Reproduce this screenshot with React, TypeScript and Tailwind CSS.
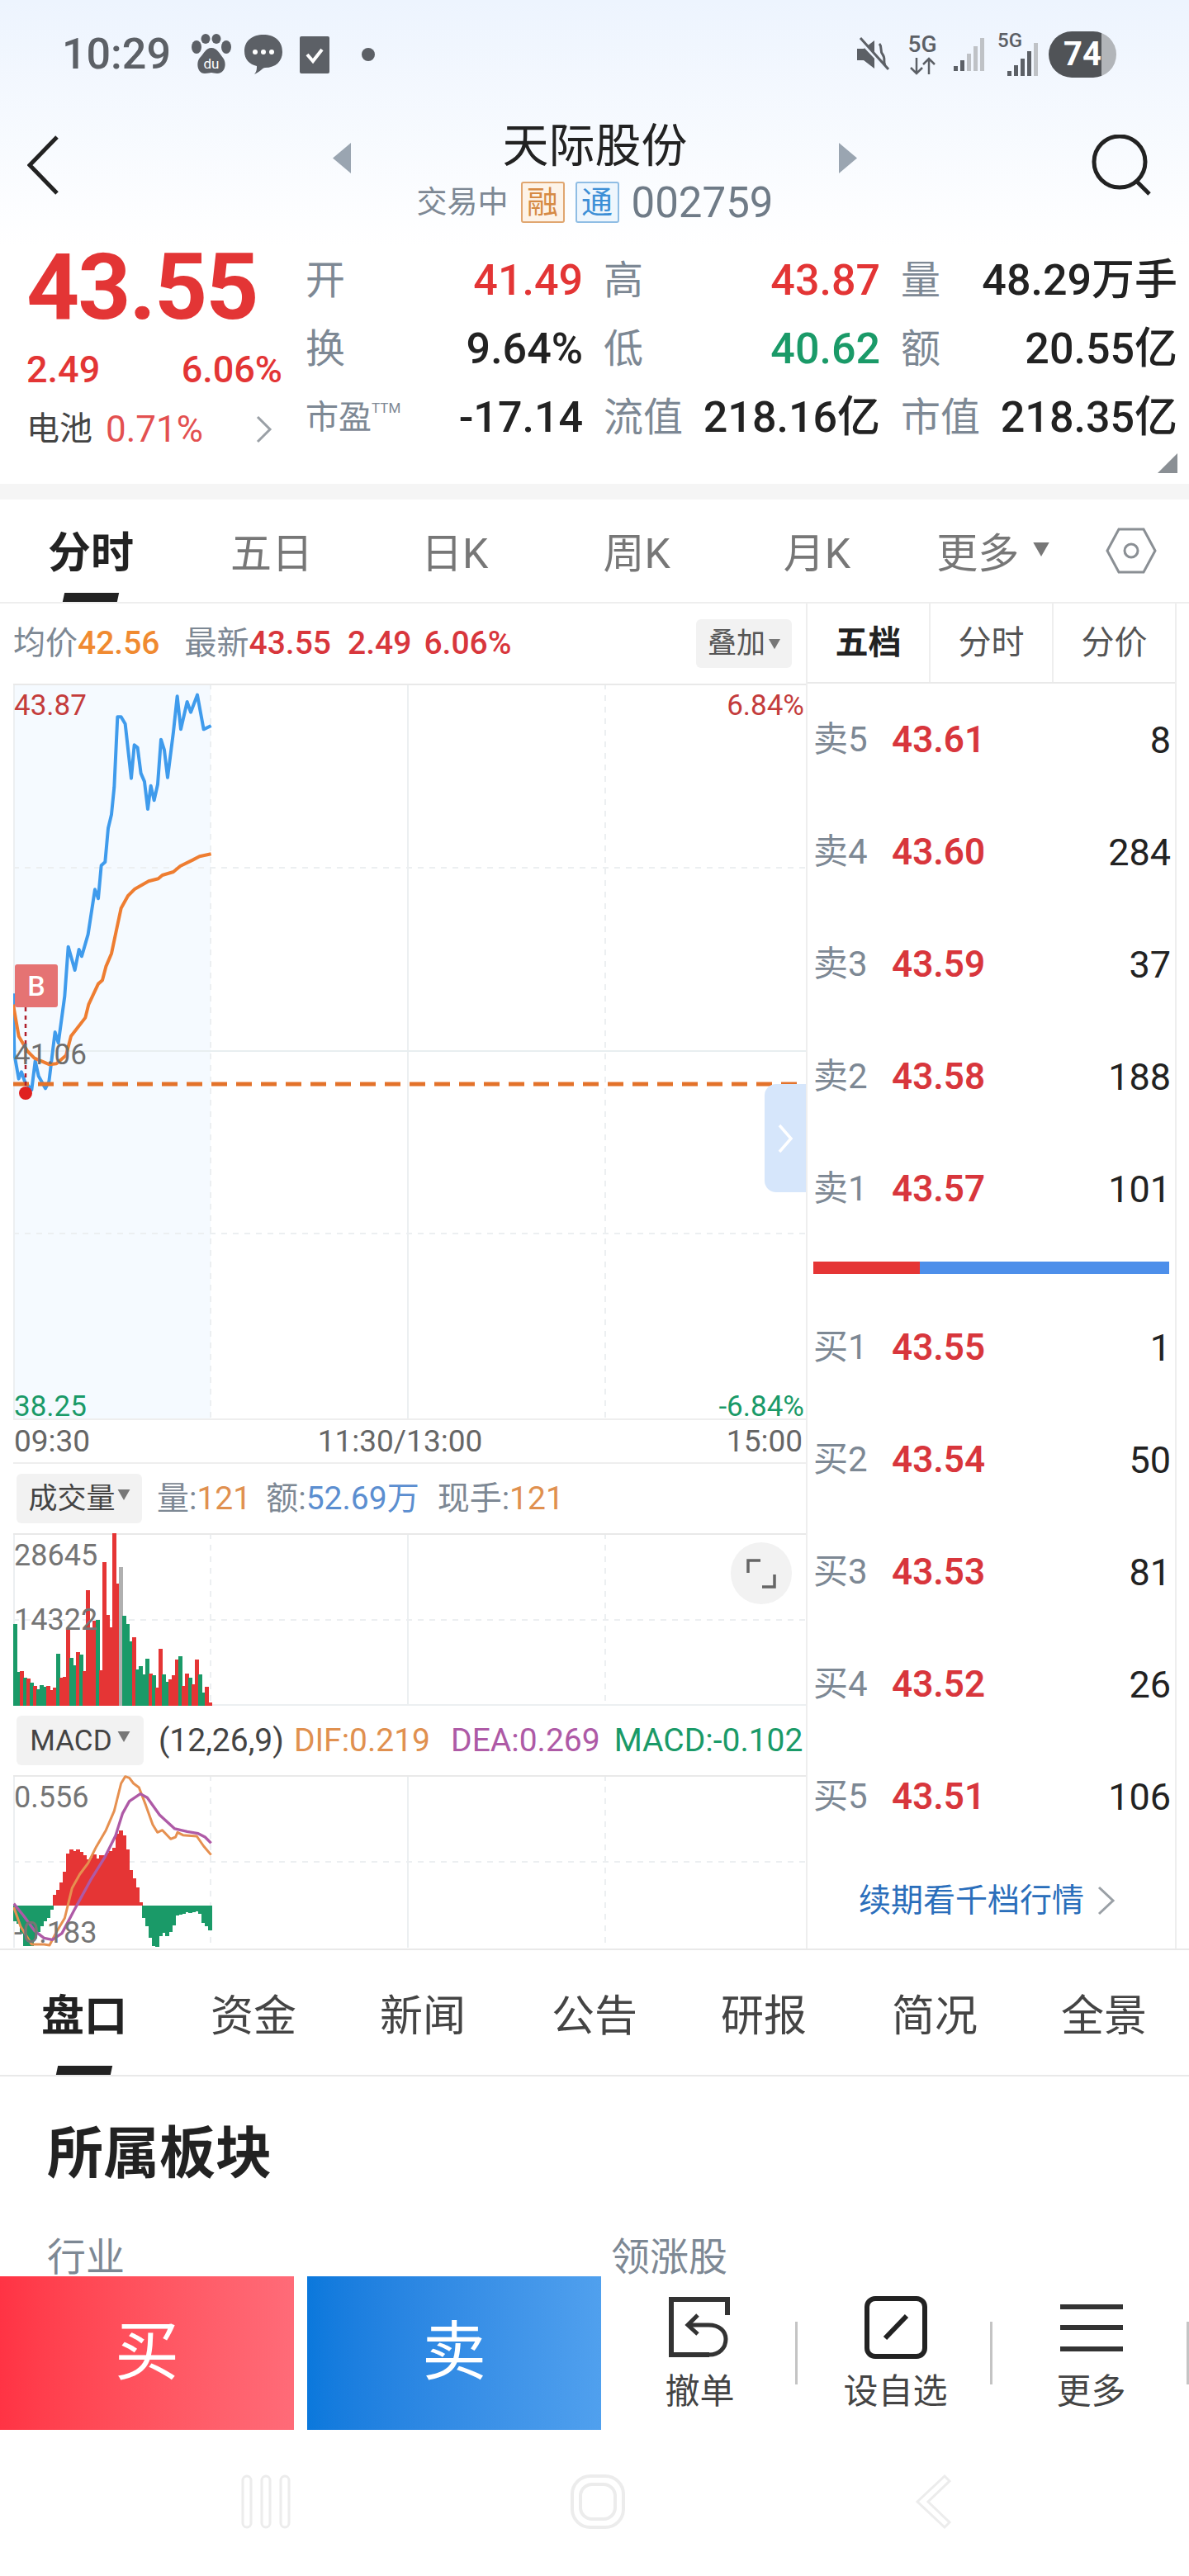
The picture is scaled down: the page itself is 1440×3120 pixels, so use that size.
import React from "react";

const blue: number[][] = [[48,1120],[52,1340],[68,1430],[78,1405],[90,1440],[100,1452],[115,1470],[128,1365],[140,1420],[165,1465],[178,1440],[200,1260],[212,1300],[235,1130],[248,950],[272,1035],[287,960],[297,985],[320,905],[345,742],[357,775],[368,655],[382,642],[393,520],[405,470],[415,370],[427,115],[440,115],[455,140],[477,338],[488,217],[500,227],[512,320],[525,350],[537,450],[548,365],[560,418],[573,360],[585,197],[597,235],[609,335],[630,170],[644,40],[657,160],[680,60],[693,98],[717,35],[740,160],[767,147]];
const avg: number[][] = [[48,1160],[68,1275],[100,1330],[125,1355],[180,1378],[205,1375],[240,1345],[258,1275],[310,1208],[322,1160],[357,1085],[372,1072],[385,1022],[405,975],[425,880],[440,810],[465,765],[490,740],[540,712],[575,703],[590,690],[630,678],[655,657],[700,635],[725,622],[767,613]];
const vol: [number, number, string][] = [[49,605,"r"],[55,380,"g"],[67,555,"g"],[79,553,"r"],[91,575,"g"],[103,580,"r"],[115,595,"g"],[127,607,"r"],[139,617,"g"],[151,602,"g"],[163,610,"g"],[175,605,"r"],[187,622,"r"],[199,613,"r"],[211,490,"g"],[223,577,"r"],[235,574,"r"],[247,400,"r"],[259,503,"g"],[271,530,"g"],[283,482,"r"],[295,493,"g"],[307,553,"r"],[319,257,"r"],[331,400,"r"],[343,370,"r"],[355,367,"g"],[367,550,"r"],[379,157,"r"],[391,347,"r"],[403,392,"r"],[415,50,"r"],[427,235,"r"],[439,175,"h"],[451,350,"g"],[463,380,"g"],[475,443,"g"],[487,430,"r"],[499,545,"g"],[511,535,"g"],[523,565,"g"],[535,508,"g"],[547,562,"r"],[559,568,"g"],[571,613,"r"],[583,472,"r"],[595,565,"g"],[607,590,"g"],[619,583,"r"],[631,568,"r"],[643,511,"r"],[655,497,"g"],[667,607,"r"],[679,562,"r"],[691,577,"g"],[703,600,"r"],[715,511,"r"],[727,565,"g"],[739,630,"g"],[751,610,"r"],[763,667,"r"]];
const macd: [number, number][] = [[55,680],[67,690],[79,725],[91,770],[103,770],[115,770],[127,745],[139,720],[151,700],[163,680],[175,670],[187,640],[199,585],[211,568],[223,540],[235,500],[247,435],[259,420],[271,425],[283,420],[295,430],[307,440],[319,455],[331,450],[343,437],[355,452],[367,442],[379,440],[391,432],[403,425],[415,415],[427,362],[439,352],[451,368],[463,420],[475,495],[487,525],[499,558],[511,612],[523,670],[535,700],[547,740],[559,770],[571,775],[583,735],[595,722],[607,735],[619,720],[631,695],[643,660],[655,658],[667,655],[679,648],[691,650],[703,648],[715,645],[727,655],[739,688],[751,700],[763,715]];
const dif: number[][] = [[50,630],[75,700],[115,765],[160,765],[180,768],[205,720],[235,670],[262,560],[290,510],[320,470],[350,410],[385,350],[415,280],[440,180],[455,155],[470,160],[485,180],[505,195],[530,260],[555,330],[572,358],[590,350],[620,382],[638,375],[645,358],[665,368],[715,372],[740,408],[767,440]];
const dea: number[][] = [[50,617],[85,660],[125,715],[160,742],[190,748],[225,725],[270,640],[330,530],[380,450],[420,370],[445,290],[470,245],[510,218],[535,232],[580,295],[635,345],[680,355],[720,362],[745,375],[767,397]];
const pts = (a: number[][]) => a.map((p) => p.join(",")).join(" ");
const barColor: Record<string, string> = { r: "#e53535", g: "#1a9a68", h: "#b0b0b0" };

function Grid({ h, midY, solidMid }: { h: number; midY?: number[]; solidMid?: number }) {
  return (
    <g>
      <line x1="1" y1="0" x2="1" y2={h} stroke="#eceff1" strokeWidth="2" />
      <line x1="239" y1="0" x2="239" y2={h} stroke="#eceff1" strokeWidth="2" strokeDasharray="7 7" />
      <line x1="478" y1="0" x2="478" y2={h} stroke="#eceff1" strokeWidth="2" />
      <line x1="717" y1="0" x2="717" y2={h} stroke="#eceff1" strokeWidth="2" strokeDasharray="7 7" />
      <line x1="0" y1="1" x2="960" y2="1" stroke="#e9e9e9" strokeWidth="2" />
      {(midY ?? []).map((y) => (
        <line key={y} x1="0" y1={y} x2="960" y2={y} stroke="#eceff1" strokeWidth="2" strokeDasharray="7 7" />
      ))}
      {solidMid !== undefined && <line x1="0" y1={solidMid} x2="960" y2={solidMid} stroke="#e8eef0" strokeWidth="2" />}
    </g>
  );
}

function Caret({ className }: { className: string }) {
  return (
    <svg viewBox="0 0 16 14" className={className}>
      <path d="M0 0H16L8 14Z" fill="currentColor" />
    </svg>
  );
}

function Stat({ label, value, color }: { label: string; value: React.ReactNode; color: string }) {
  return (
    <div className="flex items-center justify-between h-[83px]">
      <span className="text-[48px] leading-none text-[#7d8894] whitespace-nowrap">{label}</span>
      <span className={`text-[52px] leading-none font-medium whitespace-nowrap ${color}`}>{value}</span>
    </div>
  );
}

function BookRow({ label, price, qty }: { label: string; price: string; qty: string }) {
  return (
    <div className="flex items-center h-[136px] pl-[7px] pr-[5px]">
      <span className="w-[95px] text-[42px] leading-none text-[#7d8894]">{label}</span>
      <span className="text-[44px] leading-none font-semibold text-[#d8363c]">{price}</span>
      <span className="ml-auto text-[45px] leading-none text-[#222]">{qty}</span>
    </div>
  );
}

function Action({ label, icon, w }: { label: string; icon: React.ReactNode; w: string }) {
  return (
    <div className={`flex flex-col items-center pl-[4px] shrink-0 ${w}`}>
      <div className="h-[84px] flex items-center justify-center">{icon}</div>
      <span className="mt-[15px] text-[42px] leading-none text-[#444]">{label}</span>
    </div>
  );
}

export default function App() {
  return (
    <div className="w-[1440px] h-[3120px] overflow-hidden bg-white font-['Roboto','Noto_Sans_CJK_SC',sans-serif] flex flex-col">
      {/* header */}
      <div className="h-[298px] bg-gradient-to-b from-[#edf4fe] to-white shrink-0">
        <div className="h-[132px] flex items-center pl-[75px] pr-[88px] text-[#5c6066]">
          <span className="text-[52px] leading-none font-medium w-[154px]">10:29</span>
          <svg width="54" height="50" viewBox="0 0 54 50" className="mr-[12px]">
            <g fill="#5c6066">
              <ellipse cx="9" cy="16" rx="6" ry="8" />
              <ellipse cx="20" cy="6" rx="5.5" ry="6" />
              <ellipse cx="33" cy="6" rx="5.5" ry="6" />
              <ellipse cx="45" cy="16" rx="6" ry="8" />
              <path d="M27 17c7 0 10 7 14 12 5 6 3 19-7 19-3 0-5-1-7-1s-4 1-8 1c-9 0-11-13-6-19 5-5 7-12 14-12z" />
            </g>
            <text x="27" y="42" textAnchor="middle" fontSize="17" fill="#fff">du</text>
          </svg>
          <svg width="48" height="50" viewBox="0 0 48 50" className="mr-[20px]">
            <path d="M24 1C37 1 47 8 47 22c0 11-8 19-21 19-3 0-6 5-13 8 3-3 3-7 3-10C7 37 1 31 1 21 1 8 11 1 24 1z" fill="#5c6066" />
            <circle cx="14" cy="22" r="3" fill="#fff" />
            <circle cx="24" cy="22" r="3" fill="#fff" />
            <circle cx="34" cy="22" r="3" fill="#fff" />
          </svg>
          <svg width="36" height="45" viewBox="0 0 36 45" className="mr-[39px]">
            <rect width="36" height="45" rx="2" fill="#5c6066" />
            <path d="M9 22l7 8 11-14" fill="none" stroke="#fff" strokeWidth="4" />
          </svg>
          <span className="w-[16px] h-[16px] rounded-full bg-[#5c6066]" />
          <div className="ml-auto flex items-center">
            <svg width="40" height="42" viewBox="0 0 40 42" className="mr-[22px]">
              <path d="M1 14h8L22 4v34L9 28H1z" fill="#5c6066" />
              <path d="M3 3l34 36" stroke="#edf4fe" strokeWidth="4" />
              <path d="M5 1l34 38" stroke="#5c6066" strokeWidth="3" />
              <path d="M28 8c4 4 0 8 4 13s0 9 3 13" fill="none" stroke="#5c6066" strokeWidth="3" />
            </svg>
            <div className="w-[36px] mr-[20px] flex flex-col items-center text-[#5c6066]">
              <span className="text-[28px] leading-[24px] font-medium">5G</span>
              <svg width="34" height="22" viewBox="0 0 34 22" className="mt-[3px]">
                <path d="M10 1v19M3 13l7 7 7-7M25 21V2M18 9l7-7 7 7" fill="none" stroke="#5c6066" strokeWidth="2.5" />
              </svg>
            </div>
            <svg width="38" height="42" viewBox="0 0 38 42" className="mr-[15px]">
              <g fill="#5c6066"><rect x="0" y="35" width="5" height="6" /><rect x="8" y="28" width="5" height="13" /></g>
              <g fill="#bfc2c6"><rect x="16" y="20" width="5" height="21" /><rect x="24" y="11" width="5" height="30" /><rect x="32" y="1" width="5" height="40" /></g>
            </svg>
            <div className="relative w-[50px] h-[58px] mr-[12px]">
              <span className="absolute left-0 top-0 text-[24px] leading-none font-medium text-[#5c6066]">5G</span>
              <svg width="38" height="42" viewBox="0 0 38 42" className="absolute right-0 bottom-[2px]">
                <g fill="#5c6066"><rect x="0" y="35" width="5" height="6" /><rect x="8" y="28" width="5" height="13" /><rect x="16" y="20" width="5" height="21" /><rect x="24" y="11" width="5" height="30" /></g>
                <rect x="32" y="1" width="5" height="40" fill="#bfc2c6" />
              </svg>
            </div>
            <div className="w-[82px] h-[56px] rounded-full bg-[linear-gradient(90deg,#505357_0%,#505357_78%,#b2b5b9_78%)] flex items-center justify-center">
              <span className="text-[40px] leading-none font-bold text-white">74</span>
            </div>
          </div>
        </div>
        <div className="h-[136px] flex items-center pl-[33px] pr-[43px]">
          <svg width="38" height="72" viewBox="0 0 38 72" className="shrink-0">
            <path d="M36 2L3 36l33 34" fill="none" stroke="#222" strokeWidth="5" />
          </svg>
          <div className="w-[635px] ml-[332px] mt-[10px] flex flex-col items-center">
            <div className="w-full flex items-center justify-between">
              <svg width="22" height="37" viewBox="0 0 22 37" className="mt-[28px]"><path d="M22 0V37L0 18.5Z" fill="#9aa5b1" /></svg>
              <span className="text-[56px] leading-[80px] text-[#222]">天际股份</span>
              <svg width="22" height="37" viewBox="0 0 22 37" className="mt-[28px]"><path d="M0 0V37L22 18.5Z" fill="#9aa5b1" /></svg>
            </div>
            <div className="flex items-center h-[56px]">
              <span className="text-[37px] leading-none text-[#7d8894]">交易中</span>
              <span className="ml-[15px] w-[53px] h-[50px] flex items-center justify-center border-2 border-[#e0a670] rounded-[3px] bg-[#fdf3e8] text-[38px] leading-none text-[#d68a45]">融</span>
              <span className="ml-[13px] w-[53px] h-[50px] flex items-center justify-center border-2 border-[#8fbde4] rounded-[3px] bg-[#eef6fd] text-[38px] leading-none text-[#3d8fd6]">通</span>
              <span className="ml-[15px] text-[51px] leading-none text-[#6f7b87]">002759</span>
            </div>
          </div>
          <svg width="76" height="74" viewBox="0 0 76 74" className="ml-auto">
            <circle cx="35" cy="33" r="31" fill="none" stroke="#222" strokeWidth="5" />
            <path d="M55 56l16 16" stroke="#222" strokeWidth="5" />
          </svg>
        </div>
      </div>

      {/* quote */}
      <div className="h-[288px] flex shrink-0">
        <div className="w-[370px] pl-[32px] pr-[28px] flex flex-col">
          <div className="h-[100px] flex items-center text-[112px] leading-none font-bold text-[#e33535] tracking-[-2px]">43.55</div>
          <div className="mt-[24px] h-[50px] flex items-center justify-between text-[45px] leading-none font-medium text-[#e33535]">
            <span>2.49</span>
            <span>6.06%</span>
          </div>
          <div className="mt-[23px] h-[50px] flex items-center">
            <span className="text-[40px] leading-none text-[#444]">电池</span>
            <span className="ml-[16px] text-[44px] leading-none text-[#e35050]">0.71%</span>
            <svg width="20" height="34" viewBox="0 0 20 34" className="ml-auto mr-[12px]">
              <path d="M2 2l15 15L2 32" fill="none" stroke="#9aa0a6" strokeWidth="3" />
            </svg>
          </div>
        </div>
        <div className="w-[1056px] flex flex-col">
          <div className="grid grid-cols-[336px_335px_335px] gap-x-[25px]">
            <Stat label="开" value="41.49" color="text-[#e33535]" />
            <Stat label="高" value="43.87" color="text-[#e33535]" />
            <Stat label="量" value="48.29万手" color="text-[#222]" />
            <Stat label="换" value="9.64%" color="text-[#222]" />
            <Stat label="低" value="40.62" color="text-[#1a9a68]" />
            <Stat label="额" value="20.55亿" color="text-[#222]" />
            <Stat label="" value="-17.14" color="text-[#222]" />
            <Stat label="流值" value="218.16亿" color="text-[#222]" />
            <Stat label="市值" value="218.35亿" color="text-[#222]" />
          </div>
          <div className="flex justify-end mt-[-83px] h-[83px] w-[336px] items-center">
            <div className="mr-auto flex items-start text-[#7d8894]">
              <span className="text-[40px] leading-none">市盈</span>
              <span className="text-[17px] leading-none">TTM</span>
            </div>
          </div>
          <div className="flex justify-end mt-[2px]">
            <svg width="24" height="24" viewBox="0 0 24 24"><path d="M24 0V24H0Z" fill="#8a8f94" /></svg>
          </div>
        </div>
      </div>

      <div className="h-[19px] bg-[#f5f5f5] shrink-0" />

      {/* period tabs */}
      <div className="h-[126px] relative flex items-center pt-[8px] border-b-2 border-[#eeeeee] shrink-0 text-[50px] leading-none text-[#777]">
        <span className="ml-[58px] font-bold text-[#222] text-[52px]">分时</span>
        <span className="ml-[117px]">五日</span>
        <span className="ml-[131px]">日K</span>
        <span className="ml-[139px]">周K</span>
        <span className="ml-[137px]">月K</span>
        <span className="ml-[104px]">更多</span>
        <Caret className="ml-[17px] mb-[12px] w-[20px] h-[17px] text-[#777]" />
        <svg width="62" height="56" viewBox="0 0 62 56" className="ml-[68px] mb-[8px]">
          <path d="M16 2H46L60 28 46 54H16L2 28Z" fill="none" stroke="#8a8f94" strokeWidth="3" />
          <circle cx="31" cy="28" r="8" fill="none" stroke="#8a8f94" strokeWidth="3" />
        </svg>
        <div className="absolute left-[77px] bottom-0 w-[66px] h-[11px] bg-[#222] skew-x-[-12deg]" />
      </div>

      {/* chart + book */}
      <div className="h-[1629px] flex shrink-0">
        <div className="w-[976px] flex flex-col">
          <div className="h-[97px] flex items-center pl-[16px] pr-[17px] text-[39px] leading-none">
            <span className="text-[#7d8894]">均价</span>
            <span className="font-medium text-[#f08a30]">42.56</span>
            <span className="ml-[30px] text-[#7d8894]">最新</span>
            <span className="font-medium text-[#d8363c]">43.55</span>
            <span className="ml-[20px] font-medium text-[#d8363c]">2.49</span>
            <span className="ml-[15px] font-medium text-[#d8363c]">6.06%</span>
            <div className="ml-auto w-[116px] h-[59px] rounded-[6px] bg-[#f2f2f2] flex items-center justify-center text-[#555]">
              <span className="text-[35px]">叠加</span>
              <Caret className="ml-[4px] w-[14px] h-[14px] text-[#777]" />
            </div>
          </div>

          {/* main chart */}
          <div className="ml-[16px] relative h-[890px]">
            <svg width="960" height="890" viewBox="0 0 960 890" className="absolute inset-0">
              <rect x="0" y="0" width="239" height="890" fill="#f5faff" />
              <Grid h={890} midY={[223, 666]} solidMid={445} />
              <g transform="translate(-16,2) scale(0.3333)">
                <polyline points={pts(blue)} fill="none" stroke="#3f9bec" strokeWidth="12" strokeLinejoin="round" />
                <polyline points={pts(avg)} fill="none" stroke="#ee7d31" strokeWidth="12" strokeLinejoin="round" />
              </g>
              <line x1="0" y1="485" x2="960" y2="485" stroke="#e3722a" strokeWidth="5" strokeDasharray="19 11" />
              <line x1="15" y1="392" x2="15" y2="490" stroke="#b0202c" strokeWidth="2.5" strokeDasharray="5 5" />
              <circle cx="15" cy="496" r="8" fill="#e02020" />
            </svg>
            <span className="absolute left-[1px] top-[9px] text-[35px] leading-none text-[#c43c3c]">43.87</span>
            <span className="absolute right-[2px] top-[9px] text-[35px] leading-none text-[#c43c3c]">6.84%</span>
            <span className="absolute left-[1px] top-[432px] text-[35px] leading-none text-[#6e6e6e]">41.06</span>
            <span className="absolute left-[1px] bottom-[-3px] text-[35px] leading-none text-[#1a9a68]">38.25</span>
            <span className="absolute right-[2px] bottom-[-3px] text-[35px] leading-none text-[#1a9a68]">-6.84%</span>
            <div className="absolute left-[2px] top-[340px] w-[52px] h-[52px] rounded-[3px] bg-[#e57373] flex items-center justify-center text-[34px] leading-none font-medium text-white">B</div>
            <div className="absolute right-0 top-[485px] w-[50px] h-[131px] rounded-l-[14px] bg-[#d6e6fb] flex items-center justify-center">
              <svg width="20" height="36" viewBox="0 0 20 36"><path d="M3 2l14 16L3 34" fill="none" stroke="#fff" strokeWidth="3.5" /></svg>
            </div>
          </div>

          {/* time axis */}
          <div className="ml-[16px] h-[55px] flex items-center justify-between pl-[1px] pr-[4px] border-t-2 border-b-2 border-[#eeeeee] text-[37px] leading-none text-[#666]">
            <span>09:30</span>
            <span className="mr-[20px]">11:30/13:00</span>
            <span>15:00</span>
          </div>

          {/* volume */}
          <div className="h-[84px] flex items-center pl-[20px] text-[39px] leading-none">
            <div className="w-[152px] h-[60px] rounded-[6px] bg-[#f2f2f2] flex items-center justify-center text-[#444]">
              <span className="text-[35px]">成交量</span>
              <Caret className="ml-[2px] mb-[10px] w-[16px] h-[13px] text-[#777]" />
            </div>
            <span className="ml-[18px] text-[#7d8894]">量:</span>
            <span className="text-[#e0904f]">121</span>
            <span className="ml-[18px] text-[#7d8894]">额:</span>
            <span className="text-[#5b8ed0]">52.69万</span>
            <span className="ml-[22px] text-[#7d8894]">现手:</span>
            <span className="text-[#e0904f]">121</span>
          </div>
          <div className="ml-[16px] relative h-[209px]">
            <svg width="960" height="209" viewBox="0 0 960 209" className="absolute inset-0">
              <Grid h={209} midY={[105]} />
              <line x1="0" y1="208" x2="960" y2="208" stroke="#eceff1" strokeWidth="2" />
              <g transform="translate(-16,-17) scale(0.3333)" shapeRendering="crispEdges">
                {vol.map(([x, y, c]) => (
                  <rect key={x} x={x - 6} y={y} width="13" height={678 - y} fill={barColor[c]} />
                ))}
              </g>
            </svg>
            <span className="absolute left-[1px] top-[9px] text-[36px] leading-none text-[#757575]">28645</span>
            <span className="absolute left-[1px] top-[87px] text-[36px] leading-none text-[#757575]">14322</span>
            <div className="absolute left-[869px] top-[11px] w-[74px] h-[75px] rounded-full bg-[#f2f2f2] flex items-center justify-center">
              <svg width="36" height="36" viewBox="0 0 36 36"><path d="M2 17V2H17M34 19V34H19" fill="none" stroke="#666" strokeWidth="3.5" /></svg>
            </div>
          </div>

          {/* macd */}
          <div className="h-[84px] flex items-center pl-[20px] text-[39px] leading-none whitespace-nowrap">
            <div className="w-[154px] h-[60px] rounded-[6px] bg-[#f2f2f2] flex items-center justify-center text-[#444] shrink-0">
              <span className="text-[35px]">MACD</span>
              <Caret className="ml-[6px] mb-[10px] w-[16px] h-[13px] text-[#777]" />
            </div>
            <span className="ml-[18px] text-[#444]">(12,26,9)</span>
            <span className="ml-[12px] text-[#e0904f]">DIF:0.219</span>
            <span className="ml-[25px] text-[#ae5aa6]">DEA:0.269</span>
            <span className="ml-[17px] text-[#1a9a68]">MACD:-0.102</span>
          </div>
          <div className="ml-[16px] relative h-[209px]">
            <svg width="960" height="209" viewBox="0 0 960 209" className="absolute inset-0">
              <Grid h={209} midY={[105]} />
              <g transform="translate(-16,-50) scale(0.3333)" shapeRendering="crispEdges">
                {macd.map(([x, y]) => (
                  <rect key={x} x={x - 6} y={Math.min(y, 625)} width="13" height={Math.abs(625 - y)} fill={y < 625 ? "#e53535" : "#1a9a68"} />
                ))}
              </g>
              <g transform="translate(-16,-50) scale(0.3333)">
                <polyline points={pts(dif)} fill="none" stroke="#e69050" strokeWidth="9" strokeLinejoin="round" />
                <polyline points={pts(dea)} fill="none" stroke="#ae5aa6" strokeWidth="10" strokeLinejoin="round" />
              </g>
            </svg>
            <span className="absolute left-[1px] top-[9px] text-[36px] leading-none text-[#757575]">0.556</span>
            <span className="absolute left-[1px] top-[173px] text-[36px] leading-none text-[#757575]">-0.183</span>
          </div>
        </div>

        {/* order book */}
        <div className="w-[449px] flex flex-col border-l-2 border-r-2 border-[#eeeeee]">
          <div className="h-[97px] flex border-b-2 border-[#e9e9e9] text-[40px] leading-none text-[#555]">
            <div className="flex-1 flex items-center justify-center font-bold text-[#222]">五档</div>
            <div className="flex-1 flex items-center justify-center border-l-2 border-[#eeeeee]">分时</div>
            <div className="flex-1 flex items-center justify-center border-l-2 border-[#eeeeee]">分价</div>
          </div>
          <BookRow label="卖5" price="43.61" qty="8" />
          <BookRow label="卖4" price="43.60" qty="284" />
          <BookRow label="卖3" price="43.59" qty="37" />
          <BookRow label="卖2" price="43.58" qty="188" />
          <BookRow label="卖1" price="43.57" qty="101" />
          <div className="mt-[20px] mx-[7px] h-[15px] flex shrink-0">
            <div className="w-[129px] bg-[#e53535]" />
            <div className="flex-1 bg-[#4d8fea]" />
          </div>
          <div className="h-[21px] shrink-0" />
          <BookRow label="买1" price="43.55" qty="1" />
          <BookRow label="买2" price="43.54" qty="50" />
          <BookRow label="买3" price="43.53" qty="81" />
          <BookRow label="买4" price="43.52" qty="26" />
          <BookRow label="买5" price="43.51" qty="106" />
          <div className="flex-1 flex items-center pl-[62px] text-[39px] leading-none text-[#2a6ebb]">
            <span>续期看千档行情</span>
            <svg width="26" height="36" viewBox="0 0 26 36" className="ml-[14px]"><path d="M4 2l17 16L4 34" fill="none" stroke="#9aa0a6" strokeWidth="3" /></svg>
          </div>
        </div>
      </div>

      {/* info tabs */}
      <div className="h-[155px] relative flex items-center pt-[10px] border-t-2 border-b-2 border-[#e9e9e9] shrink-0 text-[52px] leading-none text-[#444]">
        <span className="ml-[50px] font-bold text-[#222]">盘口</span>
        <span className="ml-[101px]">资金</span>
        <span className="ml-[101px]">新闻</span>
        <span className="ml-[104px]">公告</span>
        <span className="ml-[101px]">研报</span>
        <span className="ml-[103px]">简况</span>
        <span className="ml-[101px]">全景</span>
        <div className="absolute left-[69px] bottom-0 w-[66px] h-[11px] bg-[#222] skew-x-[-12deg]" />
      </div>

      {/* section clipped by bottom bar */}
      <div className="h-[242px] overflow-hidden shrink-0 pl-[57px]">
        <div className="mt-[60px] text-[68px] leading-none font-bold text-[#222]">所属板块</div>
        <div className="mt-[67px] flex text-[47px] leading-none text-[#7d8894]">
          <span className="w-[683px]">行业</span>
          <span>领涨股</span>
        </div>
      </div>

      {/* trade bar */}
      <div className="h-[186px] flex shrink-0 bg-white">
        <div className="w-[356px] shrink-0 bg-gradient-to-r from-[#ff3344] to-[#ff6b78] flex items-center justify-center text-[78px] leading-none text-white">买</div>
        <div className="ml-[16px] w-[356px] shrink-0 bg-gradient-to-r from-[#0a78dc] to-[#50a0ee] flex items-center justify-center text-[78px] leading-none text-white">卖</div>
        <div className="w-[712px] shrink-0 flex items-start pt-[20px]">
          <Action
            w="w-[235px]"
            label="撤单"
            icon={
              <svg width="78" height="74" viewBox="0 0 78 74">
                <path d="M72 22V3H4V70H50" fill="none" stroke="#333" strokeWidth="6" />
                <path d="M36 22L24 34l12 11" fill="none" stroke="#333" strokeWidth="5" />
                <path d="M25 34h24c14 0 21 8 21 17 0 11-8 19-20 19" fill="none" stroke="#333" strokeWidth="5" />
              </svg>
            }
          />
          <div className="w-[3px] h-[76px] mt-[35px] bg-[#c4c4c4] shrink-0" />
          <Action
            w="w-[233px]"
            label="设自选"
            icon={
              <svg width="76" height="76" viewBox="0 0 76 76">
                <rect x="3" y="3" width="70" height="70" rx="10" fill="none" stroke="#222" strokeWidth="6" />
                <path d="M25 51L51 24" stroke="#222" strokeWidth="6" />
              </svg>
            }
          />
          <div className="w-[3px] h-[76px] mt-[35px] bg-[#c4c4c4] shrink-0" />
          <Action
            w="w-[235px]"
            label="更多"
            icon={
              <svg width="78" height="62" viewBox="0 0 78 62">
                <path d="M1 6H77M1 31H77M1 57H77" stroke="#333" strokeWidth="6" />
              </svg>
            }
          />
          <div className="w-[3px] h-[76px] mt-[35px] bg-[#c4c4c4] shrink-0" />
        </div>
      </div>

      {/* nav bar */}
      <div className="flex-1 flex items-center pb-[3px] pl-[292px]">
        <svg width="60" height="66" viewBox="0 0 60 66">
          <g fill="none" stroke="#ececec" strokeWidth="3">
            <rect x="2" y="2" width="10" height="62" rx="5" />
            <rect x="25" y="2" width="10" height="62" rx="5" />
            <rect x="48" y="2" width="10" height="62" rx="5" />
          </g>
        </svg>
        <svg width="68" height="68" viewBox="0 0 68 68" className="ml-[338px]">
          <rect x="3" y="3" width="62" height="62" rx="22" fill="none" stroke="#ececec" strokeWidth="4" />
          <rect x="13" y="13" width="42" height="42" rx="14" fill="none" stroke="#ececec" strokeWidth="4" />
        </svg>
        <svg width="46" height="68" viewBox="0 0 46 68" className="ml-[348px]">
          <path d="M38 3L5 34l33 31 6-6-26-25 26-25z" fill="none" stroke="#ececec" strokeWidth="3" />
        </svg>
      </div>
    </div>
  );
}
